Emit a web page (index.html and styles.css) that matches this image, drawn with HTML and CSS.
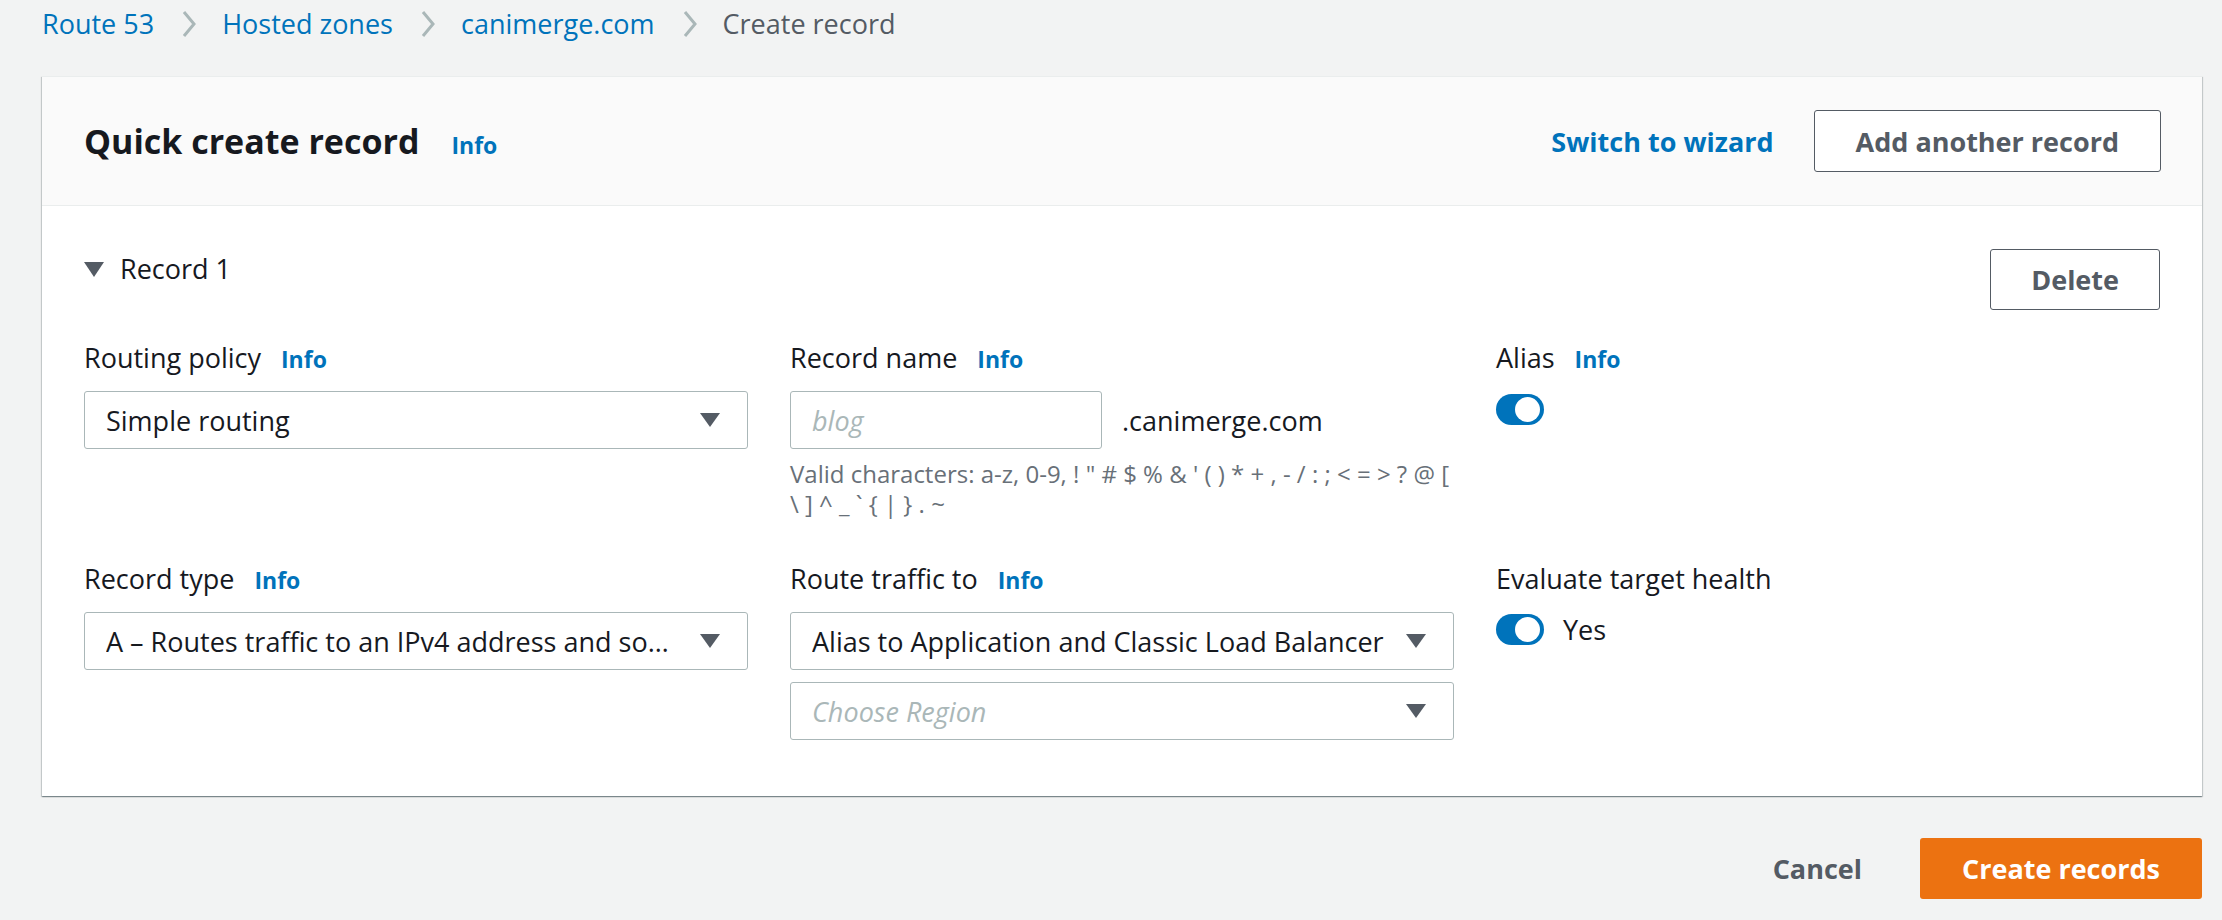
FILE: index.html
```html
<!DOCTYPE html>
<html lang="en">
<head>
<meta charset="utf-8">
<title>Create record</title>
<link rel="stylesheet" href="styles.css">
</head>
<body>
<nav class="breadcrumbs">
  <a class="crumb">Route 53</a>
  <svg class="sep" viewBox="0 0 14 28" width="14" height="28"><path d="M2 2 L12 14 L2 26" fill="none" stroke="#aab7b8" stroke-width="3"/></svg>
  <a class="crumb">Hosted zones</a>
  <svg class="sep" viewBox="0 0 14 28" width="14" height="28"><path d="M2 2 L12 14 L2 26" fill="none" stroke="#aab7b8" stroke-width="3"/></svg>
  <a class="crumb">canimerge.com</a>
  <svg class="sep" viewBox="0 0 14 28" width="14" height="28"><path d="M2 2 L12 14 L2 26" fill="none" stroke="#aab7b8" stroke-width="3"/></svg>
  <span class="crumb current">Create record</span>
</nav>

<main class="card">
  <header class="card-header">
    <div class="title-group">
      <h2 class="title">Quick create record</h2>
      <a class="info">Info</a>
    </div>
    <div class="header-actions">
      <a class="link-strong">Switch to wizard</a>
      <button class="btn">Add another record</button>
    </div>
  </header>

  <section class="card-body">
    <div class="record-head">
      <div class="record-toggle">
        <svg class="tri" viewBox="0 0 20 15" width="20" height="15"><polygon points="0,0 20,0 10,15" fill="#545b64"/></svg>
        <span>Record 1</span>
      </div>
      <button class="btn btn-delete">Delete</button>
    </div>

    <div class="form-grid">
      <div class="field">
        <div class="label">Routing policy <a class="info">Info</a></div>
        <div class="select">
          <span class="value">Simple routing</span>
          <svg class="caret" viewBox="0 0 20 14" width="20" height="14"><polygon points="0,0 20,0 10,14" fill="#545b64"/></svg>
        </div>
      </div>

      <div class="field">
        <div class="label">Record name <a class="info">Info</a></div>
        <div class="name-row">
          <input class="input" type="text" placeholder="blog">
          <span class="suffix">.canimerge.com</span>
        </div>
        <p class="help">Valid characters: a-z, 0-9, ! " # $ % &amp; ' ( ) * + , - / : ; &lt; = &gt; ? @ [ \ ] ^ _ ` { | } . ~</p>
      </div>

      <div class="field">
        <div class="label">Alias <a class="info">Info</a></div>
        <div class="toggle-row">
          <span class="toggle"></span>
        </div>
      </div>

      <div class="field">
        <div class="label">Record type <a class="info">Info</a></div>
        <div class="select">
          <span class="value">A – Routes traffic to an IPv4 address and so…</span>
          <svg class="caret" viewBox="0 0 20 14" width="20" height="14"><polygon points="0,0 20,0 10,14" fill="#545b64"/></svg>
        </div>
      </div>

      <div class="field">
        <div class="label">Route traffic to <a class="info">Info</a></div>
        <div class="select">
          <span class="value">Alias to Application and Classic Load Balancer</span>
          <svg class="caret" viewBox="0 0 20 14" width="20" height="14"><polygon points="0,0 20,0 10,14" fill="#545b64"/></svg>
        </div>
        <div class="select select-second">
          <span class="value placeholder">Choose Region</span>
          <svg class="caret" viewBox="0 0 20 14" width="20" height="14"><polygon points="0,0 20,0 10,14" fill="#545b64"/></svg>
        </div>
      </div>

      <div class="field">
        <div class="label">Evaluate target health</div>
        <div class="toggle-row">
          <span class="toggle"></span>
          <span class="toggle-text">Yes</span>
        </div>
      </div>
    </div>
  </section>
</main>

<div class="footer">
  <button class="btn-link">Cancel</button>
  <button class="btn-primary">Create records</button>
</div>
</body>
</html>
```

FILE: styles.css
```css
* { box-sizing: border-box; }

body {
  margin: 0;
  padding: 0 20px 0 42px;
  background: #f2f3f3;
  font-family: "Open Sans", "Liberation Sans", sans-serif;
  font-size: 27px;
  color: #16191f;
}

.breadcrumbs {
  display: flex;
  align-items: center;
  height: 48px;
}

.crumb {
  color: #0073bb;
  line-height: 36px;
}

.crumb.current { color: #545b64; }

.sep {
  margin: 0 26px 0 28px;
  flex: none;
}

.card {
  margin-top: 28px;
  background: #fff;
  border-top: 1px solid #eaeded;
  box-shadow: 0 1px 1px 0 rgba(0, 28, 36, 0.3), 1px 1px 1px 0 rgba(0, 28, 36, 0.15), -1px 1px 1px 0 rgba(0, 28, 36, 0.15);
}

.card-header {
  height: 129px;
  display: flex;
  align-items: center;
  justify-content: space-between;
  padding: 0 41px 0 42px;
  background: #fafafa;
  border-bottom: 1px solid #eaeded;
}

.title-group {
  display: flex;
  align-items: baseline;
  gap: 32px;
}

.title {
  margin: 0;
  font-size: 34px;
  font-weight: 700;
  line-height: 44px;
}

.info {
  color: #0073bb;
  font-size: 23px;
  font-weight: 700;
}

.header-actions {
  display: flex;
  align-items: center;
  gap: 40px;
}

.link-strong {
  color: #0073bb;
  font-weight: 700;
}

.btn {
  height: 62px;
  padding: 0 41px;
  background: #fff;
  border: 1.5px solid #545b64;
  border-radius: 3px;
  color: #545b64;
  font-family: inherit;
  font-size: 27px;
  font-weight: 700;
}

.btn-delete {
  height: 61px;
  padding: 0 40px;
}

.card-body {
  padding: 43px 42px 56px 42px;
}

.record-head {
  display: flex;
  justify-content: space-between;
  align-items: flex-start;
}

.record-toggle {
  display: flex;
  align-items: center;
  gap: 16px;
  line-height: 40px;
}

.form-grid {
  display: grid;
  grid-template-columns: repeat(3, minmax(0, 1fr));
  column-gap: 42px;
  row-gap: 42px;
  margin-top: 30px;
}

.field { min-width: 0; }

.label {
  display: flex;
  align-items: baseline;
  gap: 20px;
  line-height: 36px;
  margin-bottom: 14px;
}

.select {
  height: 58px;
  display: flex;
  align-items: center;
  gap: 20px;
  padding: 0 27px 0 21px;
  border: 1.5px solid #aab7b8;
  border-radius: 3px;
}

.select-second { margin-top: 12px; }

.value {
  flex: 1;
  min-width: 0;
  white-space: nowrap;
  overflow: hidden;
  text-overflow: ellipsis;
}

.placeholder {
  color: #aab7b8;
  font-style: italic;
}

.caret { flex: none; }

.name-row {
  display: flex;
  align-items: center;
  gap: 20px;
}

.input {
  width: 312px;
  height: 58px;
  padding: 0 21px;
  border: 1.5px solid #aab7b8;
  border-radius: 3px;
  font-family: inherit;
  font-size: 27px;
  color: #16191f;
  background: #fff;
}

.input::placeholder {
  color: #aab7b8;
  font-style: italic;
}

.help {
  margin: 10px 0 0;
  font-size: 24px;
  line-height: 30px;
  color: #687078;
}

.toggle-row {
  display: flex;
  align-items: center;
  gap: 19px;
  margin-top: 2px;
  height: 36px;
}

.toggle {
  position: relative;
  width: 48px;
  height: 31px;
  border-radius: 16px;
  background: #0073bb;
  flex: none;
}

.toggle::after {
  content: "";
  position: absolute;
  right: 4px;
  top: 3px;
  width: 25px;
  height: 25px;
  border-radius: 50%;
  background: #fff;
}

.footer {
  display: flex;
  justify-content: flex-end;
  align-items: center;
  gap: 58px;
  margin-top: 42px;
}

.btn-link {
  background: none;
  border: none;
  padding: 0;
  color: #545b64;
  font-family: inherit;
  font-size: 27px;
  font-weight: 700;
}

.btn-primary {
  height: 61px;
  padding: 0 42px;
  background: #ec7211;
  border: none;
  border-radius: 3px;
  color: #fff;
  font-family: inherit;
  font-size: 27px;
  font-weight: 700;
}
```
